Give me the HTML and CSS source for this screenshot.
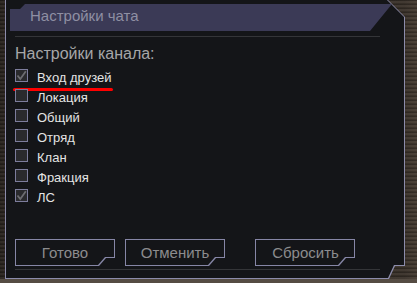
FILE: index.html
```html
<!DOCTYPE html>
<html lang="ru">
<head>
<meta charset="utf-8">
<link rel="stylesheet" href="styles.css">
</head>
<body>
<div class="scene">
  <div class="frame">
    <div class="panel">
      <div class="titlebar">Настройки чата</div>
      <div class="sep"></div>
      <div class="heading">Настройки канала:</div>
      <ul class="list">
        <li class="row marked"><span class="box"><svg viewBox="0 0 11 11" width="11" height="11"><path d="M1.5 5.5 L4.3 9 L9.8 1.3" fill="none" stroke="#6c6c70" stroke-width="1.8"/></svg></span><span class="label">Вход друзей</span><span class="underline"></span></li>
        <li class="row"><span class="box"></span><span class="label">Локация</span></li>
        <li class="row"><span class="box"></span><span class="label">Общий</span></li>
        <li class="row"><span class="box"></span><span class="label">Отряд</span></li>
        <li class="row"><span class="box"></span><span class="label">Клан</span></li>
        <li class="row"><span class="box"></span><span class="label">Фракция</span></li>
        <li class="row"><span class="box"><svg viewBox="0 0 11 11" width="11" height="11"><path d="M1.5 5.5 L4.3 9 L9.8 1.3" fill="none" stroke="#6c6c70" stroke-width="1.8"/></svg></span><span class="label">ЛС</span></li>
      </ul>
      <div class="buttons">
        <div class="btn"><span class="btn-in">Готово</span></div>
        <div class="btn btn-cancel"><span class="btn-in">Отменить</span></div>
        <div class="btn btn-reset"><span class="btn-in">Сбросить</span></div>
      </div>
      <div class="sep sep-bottom"></div>
    </div>
  </div>
</div>
</body>
</html>
```
FILE: styles.css
```css
html, body {
  margin: 0;
  padding: 0;
}
body {
  width: 417px;
  height: 283px;
  overflow: hidden;
  background-color: #3a322b;
  background-image:
    repeating-linear-gradient(180deg, rgba(0,0,0,0.25) 0 1px, rgba(255,255,255,0.03) 1px 3px, rgba(0,0,0,0.12) 3px 4px),
    linear-gradient(90deg, #2a241f 0, #2e2722 6px, #3b332b 404px, #463c33 417px);
  font-family: "Liberation Sans", Arial, sans-serif;
}
.scene {
  width: 417px;
  height: 283px;
  background: linear-gradient(180deg, transparent 0 279px, #554c43 279px 283px);
}
.frame {
  margin-left: 5px;
  width: 400px;
  height: 279px;
  background: #8c8cab;
  clip-path: polygon(0 0, 383px 0, 400px 17px, 400px 266px, 390px 266px, 384px 279px, 0 279px);
  display: flex;
}
.panel {
  margin-left: 1px;
  width: 398px;
  height: 278px;
  background: #141518;
  clip-path: polygon(0 0, 381px 0, 398px 17px, 398px 265px, 388px 265px, 382px 278px, 0 278px);
  display: flex;
  flex-direction: column;
}
.titlebar {
  margin: 4px 0 0 4px;
  width: 382px;
  height: 27px;
  box-sizing: border-box;
  padding-left: 20px;
  background: #3b3a56;
  clip-path: polygon(0 5px, 10px 5px, 15px 0, 382px 0, 360px 27px, 0 27px);
  color: #8f8fa3;
  font-size: 15px;
  line-height: 23px;
}
.sep {
  margin: 5px 0 0 9px;
  width: 365px;
  height: 1px;
  background: #343538;
  flex: none;
}
.heading {
  margin: 8px 0 5px 9px;
  font-size: 16px;
  line-height: 17px;
  color: #a6a6a8;
}
.list {
  list-style: none;
  margin: 0;
  padding: 0 0 0 9px;
}
.row {
  position: relative;
  display: flex;
  align-items: flex-start;
  height: 20px;
}
.box {
  margin-top: 2px;
  width: 13px;
  height: 13px;
  box-sizing: border-box;
  border: 1px solid #7d7d9c;
  background: #2a2a2d;
  display: flex;
  align-items: center;
  justify-content: center;
  flex: none;
}
.box svg {
  display: block;
}
.label {
  margin-left: 9px;
  padding-top: 1px;
  font-size: 13px;
  line-height: 20px;
  color: #e4e4e4;
}
.underline {
  position: absolute;
  left: -2px;
  top: 21px;
  width: 100px;
  height: 3px;
  border-radius: 2px;
  background: #ff0000;
}
.buttons {
  display: flex;
  margin: 32px 0 0 9px;
}
.btn {
  width: 100px;
  height: 27px;
  background: #8686a6;
  clip-path: polygon(0 0, 100px 0, 100px 19px, 91px 19px, 84px 27px, 0 27px);
  display: flex;
  flex: none;
}
.btn-cancel {
  margin-left: 10px;
}
.btn-reset {
  margin-left: 30px;
  width: 101px;
}
.btn-in {
  margin: 1px;
  width: 98px;
  height: 25px;
  background: #141518;
  clip-path: polygon(0 0, 98px 0, 98px 17px, 89px 17px, 82px 25px, 0 25px);
  display: flex;
  align-items: center;
  justify-content: center;
  color: #8c8c8e;
  font-size: 15px;
  line-height: 25px;
  padding-bottom: 1px;
  box-sizing: border-box;
}
.btn-reset .btn-in {
  width: 99px;
}
.sep-bottom {
  margin-top: 3px;
}
```
